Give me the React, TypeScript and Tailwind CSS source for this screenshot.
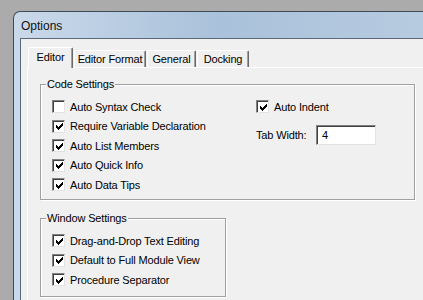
import React from 'react';

const font = "font-['Liberation_Sans',Arial,sans-serif]";

const CheckMark: React.FC = () => (
  <svg width="7" height="7" viewBox="0 0 7 7" className="block">
    <path
      d="M6 0h1v3h-1zM5 1h1v3h-1zM4 2h1v3h-1zM3 3h1v3h-1zM2 4h1v3h-1zM1 3h1v3h-1zM0 2h1v3h-1z"
      fill="#000"
    />
  </svg>
);

const CheckBox: React.FC<{ checked: boolean }> = ({ checked }) => (
  <div className="w-[13px] h-[13px] shrink-0 border border-t-[#808080] border-l-[#808080] border-b-[#e3e3e3] border-r-[#e3e3e3] bg-white flex items-center justify-center shadow-[inset_1px_1px_0_#404040]">
    {checked && (
      <div className="pl-[1px] pt-[1px]">
        <CheckMark />
      </div>
    )}
  </div>
);

const CheckRow: React.FC<{ label: string; checked: boolean }> = ({ label, checked }) => (
  <div className="h-[19.5px] flex items-center gap-[5px]">
    <CheckBox checked={checked} />
    <span className="leading-[13px] pt-[1px]">{label}</span>
  </div>
);

const GroupBox: React.FC<{ title: string; className: string; children: React.ReactNode }> = ({
  title,
  className,
  children,
}) => (
  <div
    className={`relative border border-[#a0a0a0] shadow-[1px_1px_0_#fff,inset_1px_1px_0_#fff] ${className}`}
  >
    <span className="absolute left-[5px] top-[-7px] px-[1px] bg-[#f0f0f0] leading-[13px]">{title}</span>
    {children}
  </div>
);

const tabs = ['Editor', 'Editor Format', 'General', 'Docking'];
const tabWidths = ['w-[45px]', 'w-[72px]', 'w-[49px]', 'w-[52px]'];

const App: React.FC = () => {
  return (
    <div className={`w-[423px] h-[300px] bg-[#ababab] overflow-hidden pl-[13px] pt-[11px] text-[11px] tracking-[-0.15px] text-black ${font}`}>
      {/* window */}
      <div className="h-[320px] rounded-tl-[7px] border-l border-t border-[#404a56] bg-gradient-to-r from-[#cad9ea] via-[#a9c1da] to-[#b7cbe0] pl-[6px]">
        <div className="h-[26px] flex items-center pl-[1px] pt-[1px] text-[12px] tracking-normal text-[#111]">
          Options
        </div>
        {/* client */}
        <div className="h-[300px] border-l border-t border-[#5a6878] bg-[#f0f0f0] pl-[6px] pt-[8px]">
          {/* tab strip */}
          <div className="flex items-end h-[20px] pl-[1px]">
            {tabs.map((t, i) => (
              <div
                key={t}
                className={`${tabWidths[i]} flex items-center justify-center border-l border-t border-white border-r border-r-[#696969] shadow-[inset_-1px_0_0_#a0a0a0] rounded-t-[2px] bg-[#f0f0f0] ${
                  i === 0 ? 'h-[21px] relative z-10 mb-[-1px] pb-[1px]' : 'h-[17px] ml-[1px]'
                }`}
              >
                {t}
              </div>
            ))}
          </div>
          {/* panel */}
          <div className="h-[260px] border-l border-t border-white pl-[12px] pt-[16px]">
            <GroupBox title="Code Settings" className="w-[375px] h-[116px]">
              <div className="flex pt-[12px]">
                <div className="w-[215px] pl-[11px]">
                  <CheckRow label="Auto Syntax Check" checked={false} />
                  <CheckRow label="Require Variable Declaration" checked />
                  <CheckRow label="Auto List Members" checked />
                  <CheckRow label="Auto Quick Info" checked />
                  <CheckRow label="Auto Data Tips" checked />
                </div>
                <div>
                  <CheckRow label="Auto Indent" checked />
                  <div className="flex items-center mt-[8px] h-[20px]">
                    <span className="w-[60px] pt-[1px]">Tab Width:</span>
                    <div className="w-[60px] h-[20px] bg-white border border-t-[#808080] border-l-[#808080] border-b-[#e3e3e3] border-r-[#e3e3e3] shadow-[inset_1px_1px_0_#404040] flex items-center pl-[5px] pt-[1px]">
                      4
                    </div>
                  </div>
                </div>
              </div>
            </GroupBox>
            <GroupBox title="Window Settings" className="w-[186px] h-[79px] mt-[18px]">
              <div className="pt-[12px] pl-[11px]">
                <CheckRow label="Drag-and-Drop Text Editing" checked />
                <CheckRow label="Default to Full Module View" checked />
                <CheckRow label="Procedure Separator" checked />
              </div>
            </GroupBox>
          </div>
        </div>
      </div>
    </div>
  );
};

export default App;
